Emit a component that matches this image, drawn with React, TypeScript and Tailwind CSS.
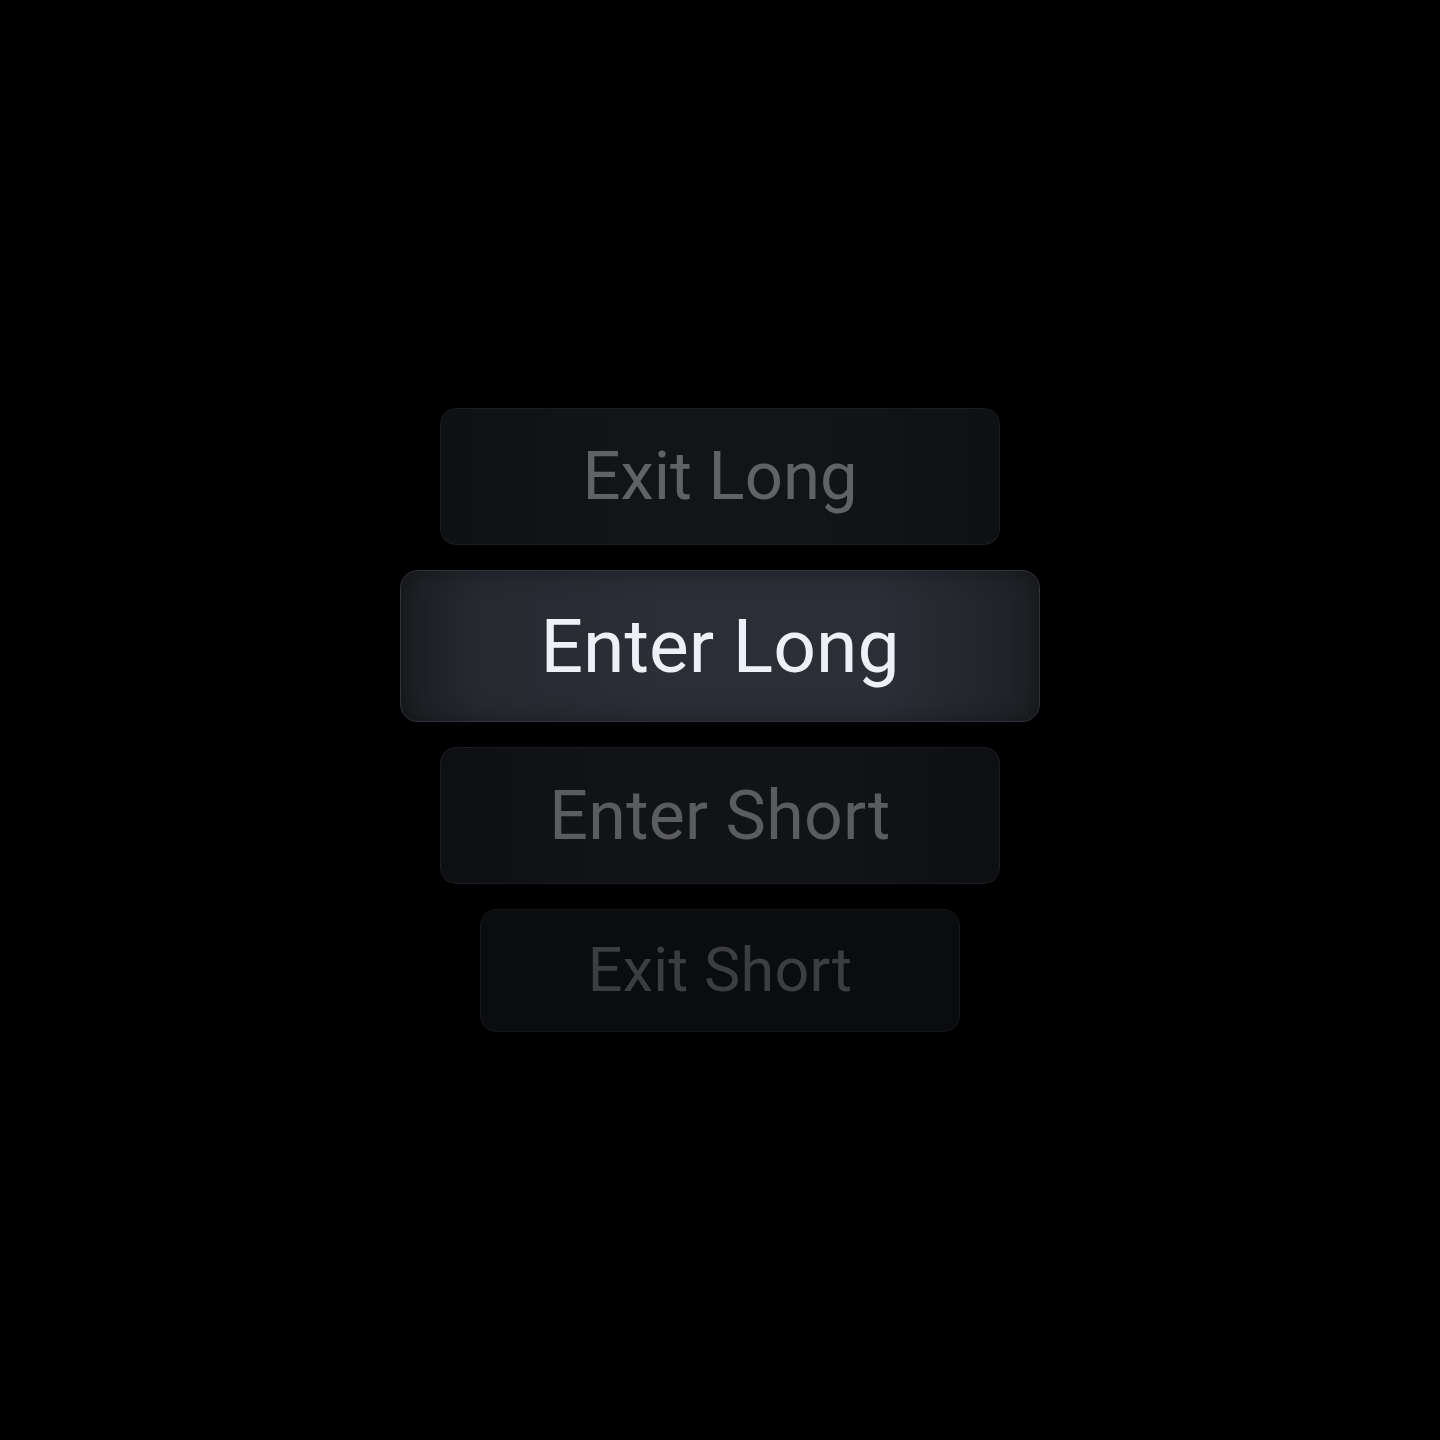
import React from "react";

type Action = {
  label: string;
  box: string;
  text: string;
};

const actions: Action[] = [
  {
    label: "Exit Long",
    box: "w-[560px] h-[137px] rounded-[16px] border border-[#1c1d21] bg-[linear-gradient(90deg,#0f1013_0%,#131417_30%,#131417_70%,#0f1013_100%)]",
    text: "text-[67px] text-[#616265]",
  },
  {
    label: "Enter Long",
    box: "w-[640px] h-[152px] rounded-[18px] border-[1.5px] border-[#30333b] bg-[linear-gradient(90deg,#1b1d21_0%,#262930_12%,#2b2e36_40%,#2b2e36_75%,#23262c_90%,#1d1f23_100%)] shadow-[inset_0_0_24px_rgba(0,0,0,0.35)]",
    text: "text-[75px] text-[#eef0f5]",
  },
  {
    label: "Enter Short",
    box: "w-[560px] h-[137px] rounded-[16px] border border-[#1c1d21] bg-[linear-gradient(90deg,#0e0f12_0%,#121316_30%,#121316_70%,#0e0f12_100%)]",
    text: "text-[68px] text-[#5b5c5f] tracking-[0.3px]",
  },
  {
    label: "Exit Short",
    box: "w-[480px] h-[123px] rounded-[16px] border border-[#151619] bg-[#0b0c0e]",
    text: "text-[61px] text-[#3c3d40] tracking-[0.3px]",
  },
];

export default function App() {
  return (
    <div className="min-h-screen bg-black flex flex-col items-center justify-center gap-[25px] font-['Roboto',sans-serif]">
      {actions.map((a) => (
        <button
          key={a.label}
          className={`${a.box} flex items-center justify-center`}
        >
          <span className={`${a.text} leading-none`}>{a.label}</span>
        </button>
      ))}
    </div>
  );
}
